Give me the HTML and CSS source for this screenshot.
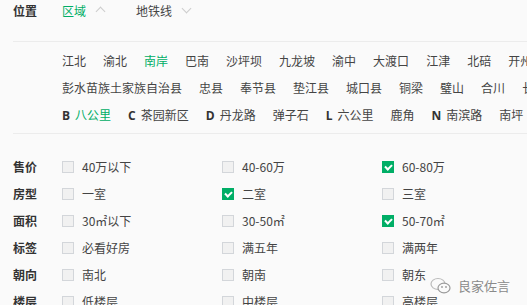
FILE: index.html
```html
<!DOCTYPE html>
<html lang="zh">
<head>
  <meta charset="UTF-8">
  <title>找房</title>
  <link rel="stylesheet" href="styles.css">
</head>
<body>
  <div class="position">
    <div class="pos-head">
      <span class="label">位置</span>
      <span class="tab active">区域 <i class="chev up"></i></span>
      <span class="tab">地铁线 <i class="chev down"></i></span>
    </div>
    <div class="districts">
      <div class="row">
        <a>江北</a><a>渝北</a><a class="on">南岸</a><a>巴南</a><a>沙坪坝</a><a>九龙坡</a><a>渝中</a><a>大渡口</a><a>江津</a><a>北碚</a><a>开州</a>
      </div>
      <div class="row">
        <a>彭水苗族土家族自治县</a><a>忠县</a><a>奉节县</a><a>垫江县</a><a>城口县</a><a>铜梁</a><a>璧山</a><a>合川</a><a>长寿</a>
      </div>
      <div class="row">
        <a><b>B</b><span class="on">八公里</span></a>
        <a><b>C</b>茶园新区</a>
        <a><b>D</b>丹龙路</a>
        <a>弹子石</a>
        <a><b>L</b>六公里</a>
        <a>鹿角</a>
        <a><b>N</b>南滨路</a>
        <a>南坪</a>
      </div>
    </div>
  </div>

  <div class="filters">
    <div class="frow">
      <span class="label">售价</span>
      <label class="opt"><i class="box"></i>40万以下</label>
      <label class="opt"><i class="box"></i>40-60万</label>
      <label class="opt"><i class="box checked"></i>60-80万</label>
    </div>
    <div class="frow">
      <span class="label">房型</span>
      <label class="opt"><i class="box"></i>一室</label>
      <label class="opt"><i class="box checked"></i>二室</label>
      <label class="opt"><i class="box"></i>三室</label>
    </div>
    <div class="frow">
      <span class="label">面积</span>
      <label class="opt"><i class="box"></i>30㎡以下</label>
      <label class="opt"><i class="box"></i>30-50㎡</label>
      <label class="opt"><i class="box checked"></i>50-70㎡</label>
    </div>
    <div class="frow">
      <span class="label">标签</span>
      <label class="opt"><i class="box"></i>必看好房</label>
      <label class="opt"><i class="box"></i>满五年</label>
      <label class="opt"><i class="box"></i>满两年</label>
    </div>
    <div class="frow">
      <span class="label">朝向</span>
      <label class="opt"><i class="box"></i>南北</label>
      <label class="opt"><i class="box"></i>朝南</label>
      <label class="opt"><i class="box"></i>朝东</label>
    </div>
    <div class="frow">
      <span class="label">楼层</span>
      <label class="opt"><i class="box"></i>低楼层</label>
      <label class="opt"><i class="box"></i>中楼层</label>
      <label class="opt"><i class="box"></i>高楼层</label>
    </div>
  </div>

  <!-- 水印 -->
  <div class="watermark">
    <svg width="22" height="18" viewBox="0 0 22 18">
      <ellipse cx="8" cy="7" rx="7" ry="5.5" fill="none" stroke="#bbb" stroke-width="1.2"/>
      <ellipse cx="14" cy="11" rx="6" ry="4.8" fill="#fafafa" stroke="#999" stroke-width="1.2"/>
      <circle cx="12" cy="10" r="0.9" fill="#999"/>
      <circle cx="16" cy="10" r="0.9" fill="#999"/>
    </svg>
    <span>良家佐言</span>
  </div>
</body>
</html>
```

FILE: styles.css
```css
body {
  margin: 0;
  padding: 0 0 0 13px;
  background: #fafafa;
  font-family: "Noto Sans CJK SC", "Noto Sans", sans-serif;
  font-size: 12px;
  color: #444;
  width: 514px;
  height: 305px;
  overflow: hidden;
  position: relative;
}

.label {
  width: 49px;
  flex: none;
  font-weight: bold;
  color: #333;
}

.pos-head {
  display: flex;
  align-items: center;
  height: 20px;
  padding-bottom: 21px;
  border-bottom: 1px solid #ececec;
}

.tab {
  display: flex;
  align-items: center;
  gap: 9px;
  margin-right: 30px;
  color: #444;
}

.tab.active {
  color: #00ae66;
}

.chev {
  width: 6px;
  height: 6px;
  border-left: 1.5px solid #ccc;
  border-top: 1.5px solid #ccc;
  display: inline-block;
}

.chev.up {
  transform: rotate(45deg);
  margin: 3px 2px 0;
}

.chev.down {
  transform: rotate(225deg);
  margin: -3px 2px 0;
}

.districts {
  padding: 5px 0 5px 49px;
  border-bottom: 1px solid #ececec;
}

.row {
  display: flex;
  gap: 17px;
  height: 27px;
  align-items: center;
  white-space: nowrap;
}

.row a {
  flex: none;
  color: #444;
}

.row .on {
  color: #00ae66;
}

.row b {
  font-family: "Open Sans", "Noto Sans", sans-serif;
  font-weight: bold;
  color: #333;
  margin-right: 5px;
}

.filters {
  padding-top: 19px;
}

.frow {
  display: flex;
  align-items: center;
  height: 27px;
}

.opt {
  width: 160px;
  flex: none;
  display: flex;
  align-items: center;
  gap: 8px;
  color: #444;
}

.box {
  width: 10px;
  height: 10px;
  border: 1px solid #d3d6da;
  background: #f1f1f1;
  position: relative;
}

.box.checked {
  background: #00ae66;
  border-color: #00ae66;
}

.box.checked::after {
  content: "";
  position: absolute;
  left: 3px;
  top: 1px;
  width: 3px;
  height: 5px;
  border-right: 2px solid #fff;
  border-bottom: 2px solid #fff;
  transform: rotate(45deg);
}

.watermark {
  position: absolute;
  left: 430px;
  top: 276px;
  display: flex;
  align-items: center;
  gap: 6px;
  color: #8a8a8a;
  font-size: 13px;
  text-shadow: 0 0 2px #fff;
}
```
